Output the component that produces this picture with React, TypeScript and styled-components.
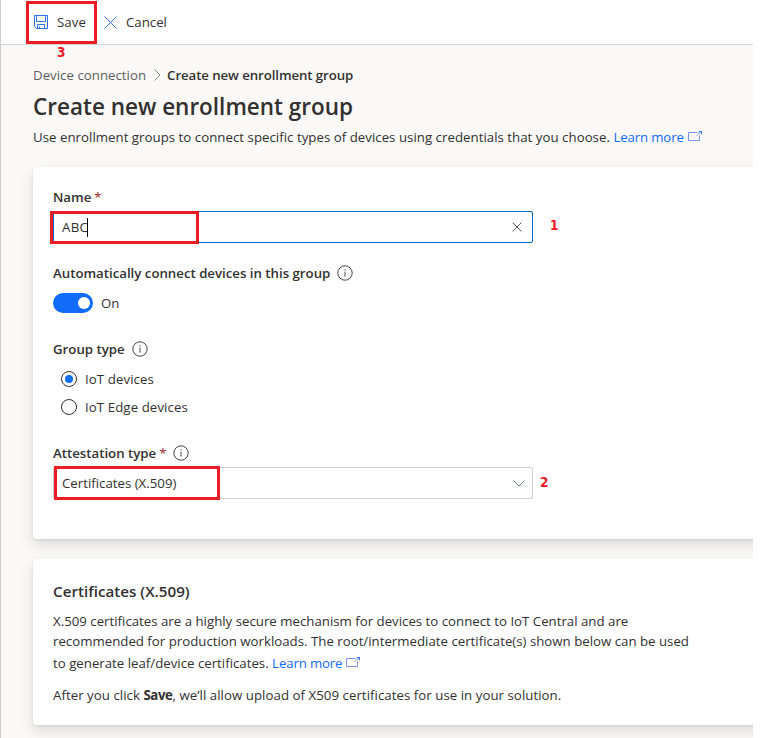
import React from 'react';
import styled, { createGlobalStyle } from 'styled-components';

const GlobalStyle = createGlobalStyle`
  * { box-sizing: border-box; }
  body { margin: 0; background: #fff; }
`;

const Page = styled.div`
  width: 753px;
  height: 738px;
  overflow: hidden;
  border-left: 1px solid #cfcdcb;
  background: #faf9f8;
  color: #323130;
  font: 400 13.25px/20px 'Open Sans', 'Noto Sans', sans-serif;
`;

const Toolbar = styled.header`
  display: flex;
  height: 45px;
  padding-left: 33px;
  background: #fff;
  border-bottom: 1px solid #d6d5d4;
`;

const Command = styled.button<{ $width: number; $gap: number }>`
  position: relative;
  display: flex;
  align-items: center;
  gap: ${(p) => p.$gap}px;
  width: ${(p) => p.$width}px;
  height: 44px;
  padding: 0;
  border: 0;
  background: none;
  color: inherit;
  font: inherit;
`;

const Highlight = styled.span<{ $x: number; $y: number; $w: number; $h: number }>`
  position: absolute;
  left: ${(p) => p.$x}px;
  top: ${(p) => p.$y}px;
  width: ${(p) => p.$w}px;
  height: ${(p) => p.$h}px;
  border: 3px solid #ed1c24;
  pointer-events: none;
`;

const Step = styled.span<{ $x: number; $y: number }>`
  position: absolute;
  left: ${(p) => p.$x}px;
  top: ${(p) => p.$y}px;
  color: #ed1c24;
  font: 700 13.5px/16px 'DejaVu Sans Condensed', 'DejaVu Sans', sans-serif;
`;

const Content = styled.main`
  padding: 20px 0 0 32px;
`;

const Breadcrumb = styled.nav`
  display: flex;
  align-items: center;
  height: 20px;
`;

const Crumb = styled.span`
  color: #605e5c;
  letter-spacing: 0.02px;
`;

const CurrentCrumb = styled.span`
  font-weight: 600;
  letter-spacing: -0.09px;
`;

const Title = styled.h1`
  margin: 6px 0 0;
  font-size: 22.5px;
  line-height: 32px;
  font-weight: 600;
`;

const Description = styled.p`
  margin: 4px 0 0;
  white-space: nowrap;
  letter-spacing: 0.025px;
`;

const Link = styled.a`
  color: #136bfb;
  letter-spacing: -0.15px;
  svg { margin-left: 4px; vertical-align: 1px; }
`;

const Card = styled.section<{ $height: number }>`
  height: ${(p) => p.$height}px;
  margin-top: 20px;
  padding: 20px;
  border-radius: 4px 0 0 4px;
  background: #fff;
  width: 740px;
  box-shadow: 0 6px 14px rgba(0, 0, 0, 0.12), 0 1px 3px rgba(0, 0, 0, 0.08);
`;

const Label = styled.div`
  display: flex;
  align-items: center;
  height: 20px;
  font-weight: 600;
  letter-spacing: -0.01px;
  svg { margin: -1px 0 0 7px; }
`;

const Required = styled.span`
  width: 7px;
  margin-left: 3px;
  color: #a4262c;
  font-weight: 400;
`;

const Field = styled.div<{ $focused?: boolean }>`
  position: relative;
  display: flex;
  align-items: center;
  width: 480px;
  height: 32px;
  margin-top: 4px;
  padding: 0 7px 0 8px;
  border: 1px solid ${(p) => (p.$focused ? '#0067d8' : '#d2d0ce')};
  border-radius: 2px;
  background: #fff;
  svg { margin-left: auto; }
`;

const Caret = styled.span`
  width: 1px;
  height: 19px;
  margin-left: -1px;
  background: #000;
`;

const Value = styled.span<{ $spacing?: number }>`
  letter-spacing: ${(p) => p.$spacing ?? 0}px;
`;

const Group = styled.div<{ $top: number }>`
  margin-top: ${(p) => p.$top}px;
`;

const ToggleRow = styled.div`
  display: flex;
  align-items: center;
  gap: 8px;
  height: 20px;
  margin-top: 10px;
`;

const Toggle = styled.span`
  display: flex;
  align-items: center;
  justify-content: flex-end;
  width: 40px;
  height: 20px;
  padding-right: 3px;
  border-radius: 10px;
  background: #136bfb;
  &::after {
    content: '';
    width: 12px;
    height: 12px;
    border-radius: 50%;
    background: #fff;
  }
`;

const RadioRow = styled.div`
  display: flex;
  align-items: center;
  gap: 8px;
  height: 28px;
  padding-left: 8px;
  letter-spacing: 0.08px;
`;

const Radios = styled.div`
  padding-top: 6px;
`;

const RadioDot = styled.span<{ $checked?: boolean }>`
  display: grid;
  place-items: center;
  width: 16px;
  height: 16px;
  border: 1px solid #323130;
  border-radius: 50%;
  &::after {
    content: '';
    width: 8px;
    height: 8px;
    border-radius: 50%;
    background: ${(p) => (p.$checked ? '#136bfb' : 'transparent')};
  }
`;

const CardTitle = styled.h2`
  margin: 2px 0 0;
  font-size: 15.2px;
  line-height: 20px;
  font-weight: 600;
`;

const Paragraph = styled.p<{ $top: number; $spacing?: number }>`
  margin: ${(p) => p.$top}px 0 0;
  letter-spacing: ${(p) => p.$spacing ?? 0}px;
`;

const Line = styled.span<{ $height?: number }>`
  display: flex;
  align-items: center;
  height: ${(p) => p.$height ?? 20}px;
  white-space: pre;
`;

const Strong = styled.strong`
  font-weight: 700;
  letter-spacing: -0.4px;
`;

const SaveIcon = () => (
  <svg width="14" height="14" viewBox="0 0 14 14" fill="none" stroke="#2f6ff0">
    <path d="M.5.5h13v13H2.5l-2-2zM2.5.5v6h9v-6M3.5 13.5V9.5h7v4M5.5 11.5v2" />
  </svg>
);

const CrossIcon = ({ size, color }: { size: number; color: string }) => (
  <svg width={size} height={size} viewBox={`0 0 ${size} ${size}`} stroke={color} fill="none">
    <path d={`M.5.5l${size - 1} ${size - 1}M${size - 0.5}.5l-${size - 1} ${size - 1}`} />
  </svg>
);

const ClearButton = styled.span`
  display: flex;
  margin-left: auto;
  margin-right: 3px;
`;

const Separator = styled.svg`
  margin: 0 6px 0 8px;
`;

const InfoIcon = () => (
  <svg width="16" height="16" viewBox="0 0 16 16" fill="none" stroke="#323130">
    <circle cx="8" cy="8" r="7.2" strokeWidth=".9" />
    <path d="M8 6.6v5M8 4.2v1.2" strokeWidth=".9" />
  </svg>
);

const ExternalIcon = () => (
  <svg width="14" height="10" viewBox="0 0 14 10" fill="none" stroke="#7d91fb">
    <path d="M9.5 1.5H.5v8h11V4.5" />
    <path d="M8.8 4.7l4-4" />
    <path d="M10.8.6h2.7v2.7" stroke="#3f78fb" strokeWidth="1.2" />
  </svg>
);

export default function App() {
  return (
    <Page>
      <GlobalStyle />
      <Toolbar>
        <Command $width={70} $gap={9}>
          <SaveIcon />
          <Value $spacing={0.1}>Save</Value>
          <Highlight $x={-8} $y={1} $w={71} $h={43} />
          <Step $x={23} $y={44}>3</Step>
        </Command>
        <Command $width={64} $gap={9}>
          <CrossIcon size={13} color="#3b70ee" />
          <Value>Cancel</Value>
        </Command>
      </Toolbar>
      <Content>
        <Breadcrumb>
          <Crumb>Device connection</Crumb>
          <Separator width="7" height="12" viewBox="0 0 7 12" fill="none" stroke="#8a8886">
            <path d="M.5.5L6 6 .5 11.5" />
          </Separator>
          <CurrentCrumb>Create new enrollment group</CurrentCrumb>
        </Breadcrumb>
        <Title>Create new enrollment group</Title>
        <Description>
          Use enrollment groups to connect specific types of devices using credentials that you choose.{' '}
          <Link>Learn more<ExternalIcon /></Link>
        </Description>
        <Card $height={372}>
          <Label>Name<Required>*</Required></Label>
          <Field $focused>
            <Value $spacing={0.3}>ABC</Value>
            <Caret />
            <ClearButton><CrossIcon size={10} color="#605e5c" /></ClearButton>
            <Highlight $x={-4} $y={-1} $w={149} $h={33} />
            <Step $x={496} $y={5}>1</Step>
          </Field>
          <Group $top={20}>
            <Label>Automatically connect devices in this group<InfoIcon /></Label>
            <ToggleRow><Toggle />On</ToggleRow>
          </Group>
          <Group $top={26}>
            <Label>Group type<InfoIcon /></Label>
            <Radios>
              <RadioRow><RadioDot $checked />IoT devices</RadioRow>
              <RadioRow><RadioDot />IoT Edge devices</RadioRow>
            </Radios>
          </Group>
          <Group $top={22}>
            <Label>Attestation type<Required>*</Required><InfoIcon /></Label>
            <Field>
              <Value>Certificates (X.509)</Value>
              <svg width="12" height="7" viewBox="0 0 12 7" fill="none" stroke="#5f7f9c">
                <path d="M.5.5L6 6 11.5.5" />
              </svg>
              <Highlight $x={0} $y={-2} $w={166} $h={34} />
              <Step $x={486} $y={6}>2</Step>
            </Field>
          </Group>
        </Card>
        <Card $height={166}>
          <CardTitle>Certificates (X.509)</CardTitle>
          <Paragraph $top={10}>
            <Line>X.509 certificates are a highly secure mechanism for devices to connect to IoT Central and are</Line>
            <Line>recommended for production workloads. The root/intermediate certificate(s) shown below can be used</Line>
            <Line $height={24}>to generate leaf/device certificates. <Link>Learn more<ExternalIcon /></Link></Line>
          </Paragraph>
          <Paragraph $top={10} $spacing={0.04}>
            <Line>After you click <Strong>Save</Strong>, we’ll allow upload of X509 certificates for use in your solution.</Line>
          </Paragraph>
        </Card>
      </Content>
    </Page>
  );
}
